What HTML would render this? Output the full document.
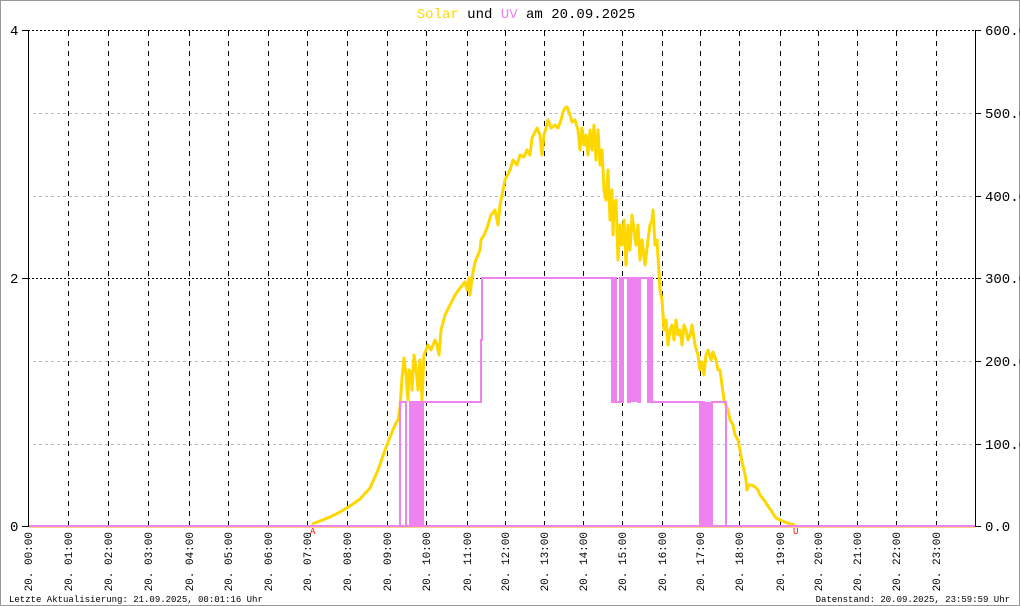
<!DOCTYPE html>
<html><head><meta charset="utf-8"><style>
html,body{margin:0;padding:0;background:#fff;}
svg{display:block;}
text{font-family:"Liberation Mono","DejaVu Sans Mono",monospace;}
</style></head><body>
<svg width="1020" height="606" viewBox="0 0 1020 606" xmlns="http://www.w3.org/2000/svg">
<rect x="0.5" y="0.5" width="1019" height="605" fill="#fff" stroke="#999" stroke-width="1"/>
<text x="526" y="18" font-size="14" text-anchor="middle"><tspan fill="#ffd700">Solar</tspan> und <tspan fill="#ee82ee">UV</tspan> am 20.09.2025</text>
<g stroke="#bbb" stroke-width="1" stroke-dasharray="3,3">
<line x1="33" y1="113.5" x2="975" y2="113.5"/>
<line x1="33" y1="196.5" x2="975" y2="196.5"/>
<line x1="33" y1="361.5" x2="975" y2="361.5"/>
<line x1="33" y1="444.5" x2="975" y2="444.5"/>
</g>
<g stroke="#000" stroke-width="1" stroke-dasharray="2,2">
<line x1="28" y1="30.5" x2="975" y2="30.5"/>
<line x1="28" y1="278.5" x2="975" y2="278.5"/>
</g>
<g stroke="#000" stroke-width="1" stroke-dasharray="5,5">
<line x1="68.5" y1="31" x2="68.5" y2="526"/><line x1="108.5" y1="31" x2="108.5" y2="526"/>
<line x1="148.5" y1="31" x2="148.5" y2="526"/><line x1="189.5" y1="31" x2="189.5" y2="526"/>
<line x1="228.5" y1="31" x2="228.5" y2="526"/><line x1="268.5" y1="31" x2="268.5" y2="526"/>
<line x1="307.5" y1="31" x2="307.5" y2="526"/><line x1="347.5" y1="31" x2="347.5" y2="526"/>
<line x1="387.5" y1="31" x2="387.5" y2="526"/><line x1="426.5" y1="31" x2="426.5" y2="526"/>
<line x1="467.5" y1="31" x2="467.5" y2="526"/><line x1="505.5" y1="31" x2="505.5" y2="526"/>
<line x1="544.5" y1="31" x2="544.5" y2="526"/><line x1="583.5" y1="31" x2="583.5" y2="526"/>
<line x1="622.5" y1="31" x2="622.5" y2="526"/><line x1="662.5" y1="31" x2="662.5" y2="526"/>
<line x1="700.5" y1="31" x2="700.5" y2="526"/><line x1="739.5" y1="31" x2="739.5" y2="526"/>
<line x1="780.5" y1="31" x2="780.5" y2="526"/><line x1="818.5" y1="31" x2="818.5" y2="526"/>
<line x1="857.5" y1="31" x2="857.5" y2="526"/><line x1="896.5" y1="31" x2="896.5" y2="526"/>
<line x1="936.5" y1="31" x2="936.5" y2="526"/>
</g>
<g stroke="#000" stroke-width="1">
<line x1="28.5" y1="30" x2="28.5" y2="526"/>
<line x1="975.5" y1="30" x2="975.5" y2="526"/>
<line x1="22" y1="30.5" x2="29" y2="30.5"/><line x1="22" y1="278.5" x2="29" y2="278.5"/><line x1="22" y1="526.5" x2="29" y2="526.5"/>
<line x1="975" y1="30.5" x2="981" y2="30.5"/><line x1="975" y1="113.5" x2="981" y2="113.5"/><line x1="975" y1="196.5" x2="981" y2="196.5"/>
<line x1="975" y1="278.5" x2="981" y2="278.5"/><line x1="975" y1="361.5" x2="981" y2="361.5"/><line x1="975" y1="444.5" x2="981" y2="444.5"/>
<line x1="975" y1="526.5" x2="981" y2="526.5"/>
</g>
<g font-size="14" fill="#000">
<text x="10" y="35">4</text><text x="10" y="283">2</text><text x="10" y="531">0</text>
<text x="985" y="35">600.0</text><text x="985" y="118">500.0</text><text x="985" y="201">400.0</text>
<text x="985" y="283">300.0</text><text x="985" y="366">200.0</text><text x="985" y="449">100.0</text>
<text x="985" y="531">0.0</text>
</g>
<line x1="29" y1="527" x2="975" y2="527" stroke="#ffa500" stroke-width="1"/>
<polyline fill="none" stroke="#ffd700" stroke-width="3" stroke-linejoin="round" points="312,524 320,521 330,517 340,512 350,506 360,499 370,488 378,470 385,450 390,437 395,425 398,420 400,408 402,378 404,358 406,375 408,400 409,370 411,373 412,390 414,355 416,368 418,390 420,360 422,400 424,355 426,350 428,345 431,350 433,345 435,340 437,345 439,355 441,330 445,315 450,305 455,295 460,288 465,282 467,290 469,278 470,295 472,278 475,262 478,255 480,250 481,240 484,235 487,228 491,215 495,210 498,225 500,205 505,180 510,170 513,160 517,165 520,155 524,157 527,150 530,155 532,138 537,128 540,135 542,155 544,135 546,128 548,120 551,128 555,125 558,128 561,120 563,112 565,108 567,107 570,115 572,122 575,120 578,130 580,150 582,128 584,145 586,135 588,155 590,130 592,150 594,125 596,160 598,130 600,165 602,150 604,190 606,200 608,170 610,220 612,190 613,235 614,205 616,200 618,260 620,225 622,245 624,220 626,265 628,225 630,250 632,215 634,230 636,245 638,225 640,260 642,240 645,265 648,240 650,225 652,220 653,210 655,245 657,240 660,290 662,300 664,330 666,320 668,345 670,330 672,325 674,340 676,320 678,335 680,330 682,345 684,325 686,330 688,340 690,335 692,325 695,345 698,355 700,370 702,362 704,375 706,355 708,350 711,360 713,352 716,360 718,370 720,370 722,385 724,400 726,405 728,410 730,420 733,425 735,435 738,440 740,450 742,462 744,470 746,480 747,490 749,485 752,485 755,487 758,490 760,495 764,500 768,506 772,512 776,518 780,520 785,522 790,524 795,525"/>
<g stroke="#ee82ee" stroke-width="2" fill="none">
<polyline points="29,526 400,526 400,402 406,402 406,526 410,526 410,402 426,402 481,402 481,340 482,340 482,278 612,278 612,402 614,402 614,278 616,278 616,402 620,402 620,278 621,278 621,402 623,402 623,278 628,278 628,402 630,402 630,278 638,278 638,402 640,402 640,278 648,278 648,402 650,402 650,278 652,278 652,402 700,402 700,526 702,526 702,402 704,402 704,526 712,526 712,402 726,402 726,526 975,526"/>
<line x1="400" y1="526" x2="726" y2="526"/>
</g>
<rect x="411" y="402" width="13" height="124" fill="#ee82ee"/>
<rect x="630" y="278" width="8" height="124" fill="#ee82ee"/>
<rect x="701" y="402" width="10" height="124" fill="#ee82ee"/>
<text x="310" y="534" font-size="9" fill="#f00">A</text>
<text x="793" y="534" font-size="9" fill="#f00">U</text>
<g font-size="11" fill="#000" text-anchor="end">
<text transform="translate(32,532) rotate(-90)">20. 00:00</text>
<text transform="translate(72,532) rotate(-90)">20. 01:00</text>
<text transform="translate(112,532) rotate(-90)">20. 02:00</text>
<text transform="translate(152,532) rotate(-90)">20. 03:00</text>
<text transform="translate(193,532) rotate(-90)">20. 04:00</text>
<text transform="translate(232,532) rotate(-90)">20. 05:00</text>
<text transform="translate(272,532) rotate(-90)">20. 06:00</text>
<text transform="translate(311,532) rotate(-90)">20. 07:00</text>
<text transform="translate(351,532) rotate(-90)">20. 08:00</text>
<text transform="translate(391,532) rotate(-90)">20. 09:00</text>
<text transform="translate(430,532) rotate(-90)">20. 10:00</text>
<text transform="translate(471,532) rotate(-90)">20. 11:00</text>
<text transform="translate(509,532) rotate(-90)">20. 12:00</text>
<text transform="translate(548,532) rotate(-90)">20. 13:00</text>
<text transform="translate(587,532) rotate(-90)">20. 14:00</text>
<text transform="translate(626,532) rotate(-90)">20. 15:00</text>
<text transform="translate(666,532) rotate(-90)">20. 16:00</text>
<text transform="translate(704,532) rotate(-90)">20. 17:00</text>
<text transform="translate(743,532) rotate(-90)">20. 18:00</text>
<text transform="translate(784,532) rotate(-90)">20. 19:00</text>
<text transform="translate(822,532) rotate(-90)">20. 20:00</text>
<text transform="translate(861,532) rotate(-90)">20. 21:00</text>
<text transform="translate(900,532) rotate(-90)">20. 22:00</text>
<text transform="translate(940,532) rotate(-90)">20. 23:00</text>
</g>
<text x="9" y="602" font-size="9" fill="#000">Letzte Aktualisierung: 21.09.2025, 00:01:16 Uhr</text>
<text x="1010" y="602" font-size="9" fill="#000" text-anchor="end">Datenstand: 20.09.2025, 23:59:59 Uhr</text>
</svg>
</body></html>
